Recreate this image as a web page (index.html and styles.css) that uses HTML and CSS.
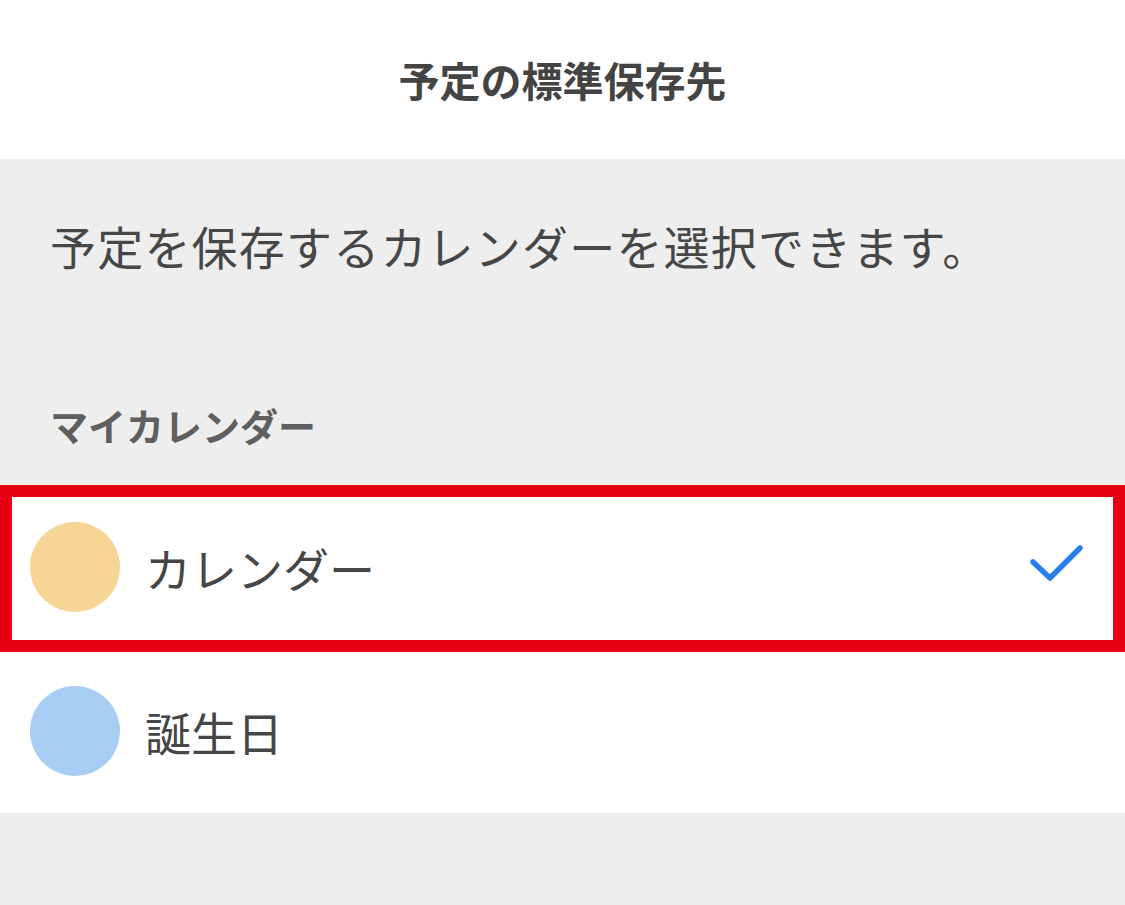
FILE: index.html
```html
<!DOCTYPE html>
<html lang="ja">
<head>
<meta charset="utf-8">
<link rel="stylesheet" href="styles.css">
</head>
<body>
<div class="screen">
  <header class="header"><h1 class="title">予定の標準保存先</h1></header>
  <section class="intro">
    <p class="desc">予定を保存するカレンダーを選択できます。</p>
    <h2 class="section-label">マイカレンダー</h2>
  </section>
  <ul class="list">
    <li class="row selected">
      <span class="dot dot-orange"></span>
      <span class="name">カレンダー</span>
      <svg class="check" width="56" height="40" viewBox="0 0 56 40"><path d="M4 17 L21 33 L51 3" fill="none" stroke="#2a7fee" stroke-width="5.5" stroke-linecap="round" stroke-linejoin="round"/></svg>
      <span class="highlight"></span>
    </li>
    <li class="row">
      <span class="dot dot-blue"></span>
      <span class="name">誕生日</span>
    </li>
  </ul>
  <div class="footer"></div>
</div>
</body>
</html>
```
FILE: styles.css
```css
* { box-sizing: border-box; }
html, body { margin: 0; padding: 0; }
body {
  background: #eeeeee;
  font-family: "Noto Sans CJK JP", "Noto Sans", sans-serif;
  color: #464646;
}
.screen { width: 1125px; height: 905px; overflow: hidden; display: flex; flex-direction: column; }
.header {
  height: 159px;
  background: #ffffff;
  display: flex;
  align-items: center;
  justify-content: center;
  flex-shrink: 0;
}
.title {
  margin: 0;
  font-size: 41px;
  font-weight: 700;
  color: #444444;
  line-height: 1;
  position: relative;
  top: 0;
}
.intro { background: #eeeeee; display: flex; flex-direction: column; flex-shrink: 0; }
.desc {
  margin: 0;
  height: 172px;
  padding: 0 50px;
  display: flex;
  align-items: center;
  font-size: 46px;
  color: #464646;
  letter-spacing: 1.2px;
}
.section-label {
  margin: 0;
  height: 154px;
  padding: 0 50px 40px;
  display: flex;
  align-items: flex-end;
  font-size: 38px;
  line-height: 40px;
  font-weight: 700;
  color: #5f5f5f;
}
.list { list-style: none; margin: 0; padding: 0; background: #ffffff; flex-shrink: 0; }
.row {
  position: relative;
  height: 164px;
  display: flex;
  align-items: center;
  padding: 0 40px 0 30px;
  background: #ffffff;
}
.dot { width: 90px; height: 90px; border-radius: 50%; flex-shrink: 0; }
.dot-orange { background: #f7d594; }
.dot-blue { background: #a8cdf4; }
.name { margin-left: 25px; font-size: 46px; color: #464646; line-height: 1; }
.check { margin-left: auto; margin-top: -4px; }
.highlight {
  position: absolute;
  left: 0;
  right: 0;
  top: 0;
  bottom: -3px;
  border: 12px solid #e60012;
  z-index: 2;
  pointer-events: none;
}
.footer { flex: 1; background: #eeeeee; }
```
